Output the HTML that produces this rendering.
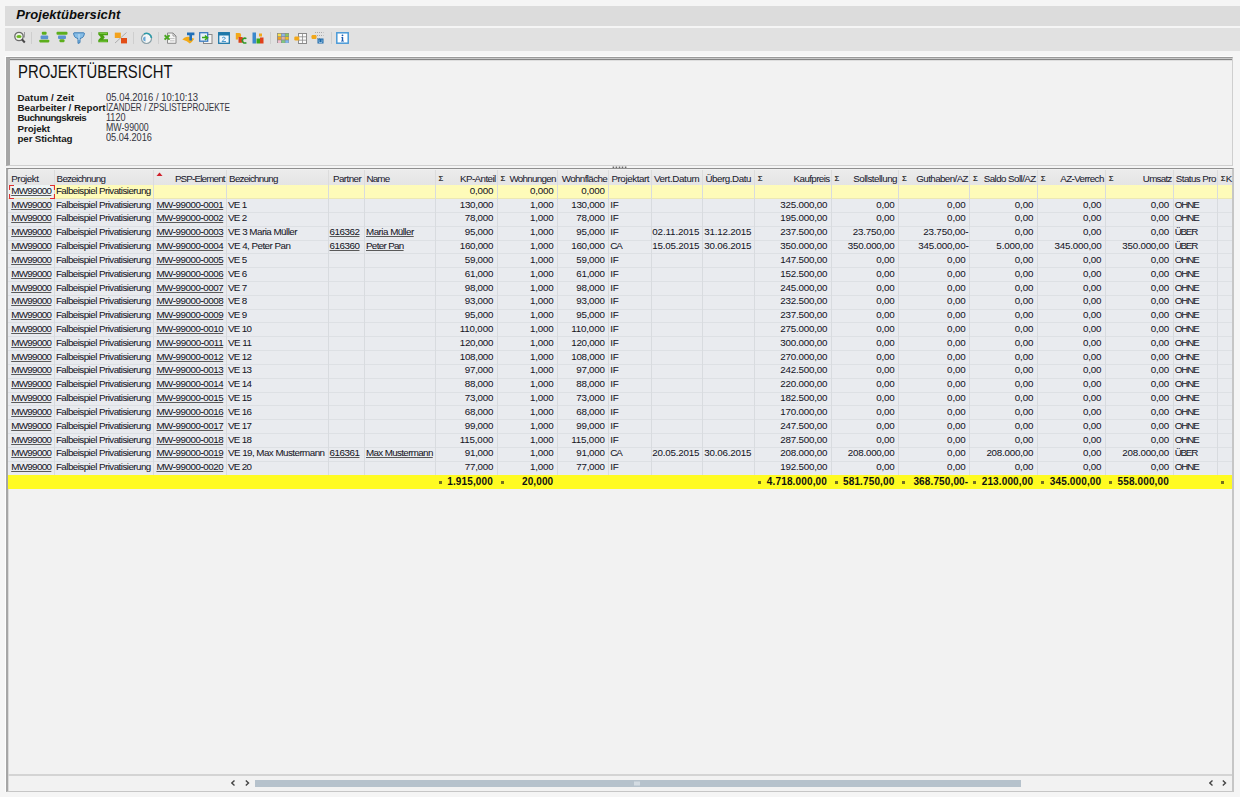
<!DOCTYPE html>
<html><head><meta charset="utf-8"><title>Projektübersicht</title>
<style>
*{box-sizing:border-box;margin:0;padding:0}
html,body{width:1240px;height:797px;overflow:hidden}
body{position:relative;background:#f5f5f5;font-family:"Liberation Sans",sans-serif;color:#1e1e28}
.abs{position:absolute}
.t{position:absolute;white-space:nowrap}
#title{left:5px;top:5.5px;width:1235px;height:20px;background:#dcdcdc}
.ttl{font-size:13px;font-weight:bold;font-style:italic;color:#0c0c0c}
#tb{left:5px;top:27.5px;width:1235px;height:23px;background:#e1e1e1}
#hp{left:6px;top:57px;width:1227px;height:109px;background:#f2f2f2;border-top:1px solid #9a9a9a;border-left:4px solid #a6a6a6;border-right:1px solid #cfcfcf;border-bottom:1.5px solid #d0d0d0;box-shadow:inset 0 1px #c8c8c8,inset 0 2px #858585,inset 0 3px #dedede,-1px -1px 0 #fdfdfd}
.big{font-size:17.6px;color:#111;transform:scaleX(0.845);transform-origin:0 0}
.lb{font-size:9.8px;font-weight:bold;color:#1a1a1a}
.vl{font-size:10px;color:#33333d}
#grid{left:6px;top:167.8px;width:1228px;height:624.5px;background:#f2f2f2;border-top:1.7px solid #8f8f8f;border-left:2px solid #a6a6a6;border-right:2px solid #c6c6c6;border-bottom:1.5px solid #c6c6c6;box-shadow:inset 1px 0 #dadada,-1px 0 0 #fdfdfd}
.c{font-size:9.8px;line-height:13px;color:#15151f;-webkit-text-stroke:0.04px #15151f}
.h{font-size:9.8px;line-height:13px;color:#20202e;-webkit-text-stroke:0.04px #20202e}
.s{font-size:10px;line-height:13px;font-weight:bold;color:#111}
.u span{text-decoration:underline;text-decoration-color:#5a5a5a;text-underline-offset:1px}
.vl2{position:absolute;width:1px;background:#d8dbdf}
.sig{font-size:8px;font-weight:bold;line-height:13px;color:#333}
</style></head><body>

<div id="title" class="abs"></div>
<div class="t ttl" style="left:16.30px;top:6.50px;letter-spacing:0.094px;"><span>Projektübersicht</span></div>
<div id="tb" class="abs"></div>
<div class="abs" style="left:31.0px;top:31.5px;width:1px;height:12px;background:#cecece"></div>
<div class="abs" style="left:91.0px;top:31.5px;width:1px;height:12px;background:#cecece"></div>
<div class="abs" style="left:133.0px;top:31.5px;width:1px;height:12px;background:#cecece"></div>
<div class="abs" style="left:157.7px;top:31.5px;width:1px;height:12px;background:#cecece"></div>
<div class="abs" style="left:270.4px;top:31.5px;width:1px;height:12px;background:#cecece"></div>
<div class="abs" style="left:330.6px;top:31.5px;width:1px;height:12px;background:#cecece"></div>
<svg class="abs" style="left:13.0px;top:31.0px" width="13" height="13" viewBox="0 0 13 13"><circle cx="6" cy="5.5" r="4.2" fill="#eef3e8" stroke="#6a6a6a" stroke-width="1.3"/><ellipse cx="6" cy="5.5" rx="2.6" ry="1.6" fill="#6cb820"/><path d="M8.8 8.3 L11.8 11.5" stroke="#4a4a4a" stroke-width="2"/><path d="M11.5 1 V6.5" stroke="#9a9a9a" stroke-width="1"/></svg>
<svg class="abs" style="left:38.5px;top:31.0px" width="11" height="12" viewBox="0 0 11 12"><rect x="2.8" y="0.8" width="4.8" height="3" rx="1" fill="#5cae1c"/><rect x="1.6" y="4.6" width="7.6" height="3.6" rx="1" fill="#5b93cf"/><rect x="0.3" y="8.8" width="10" height="2.6" rx="0.8" fill="#5cae1c"/></svg>
<svg class="abs" style="left:55.5px;top:31.0px" width="12" height="12" viewBox="0 0 12 12"><rect x="0.5" y="0.8" width="11" height="3" rx="1" fill="#5cae1c"/><rect x="2" y="4.4" width="8" height="3.6" rx="1" fill="#5b93cf"/><rect x="3.5" y="8.2" width="5" height="3" rx="1" fill="#5cae1c"/></svg>
<svg class="abs" style="left:73.0px;top:31.5px" width="12" height="12" viewBox="0 0 12 12"><path d="M1 0.8 H10.8 Q11.6 0.8 11.3 2.2 L10.6 4.2 Q10 5.6 8.4 6 L7 6.6 V10.6 L5 11.4 V6.6 L3.6 6 Q2 5.6 1.4 4.2 L0.7 2.2 Q0.4 0.8 1 0.8 Z" fill="#86bde6" stroke="#3c7cb4" stroke-width="1"/><path d="M6 2 V8" stroke="#d4e9f8" stroke-width="0.8"/></svg>
<svg class="abs" style="left:98.0px;top:32.0px" width="11" height="11" viewBox="0 0 11 11"><path d="M0.3 0.3 H10 V3.3 H5.2 L6.8 5.2 L5.2 7.2 H10 V10.3 H0.3 V8 L2.8 5.2 L0.3 2.5 Z" fill="#4aa012"/><path d="M1.5 1.5 H9 M1.5 9.2 H9" stroke="#86d84a" stroke-width="0.7"/></svg>
<svg class="abs" style="left:114.0px;top:32.0px" width="14" height="12" viewBox="0 0 14 12"><path d="M1 11 L12.5 0.5" stroke="#a0a0a0" stroke-width="0.8"/><rect x="0.8" y="0.6" width="6" height="5.4" fill="#f3a21c"/><rect x="7" y="6" width="6" height="5.4" fill="#e24d16"/></svg>
<svg class="abs" style="left:139.5px;top:31.5px" width="13" height="13" viewBox="0 0 13 13"><circle cx="6.5" cy="6.5" r="5" fill="#f4f6f6" stroke="#8aa0a8" stroke-width="1.2"/><path d="M4 2 A5 5 0 0 1 11.5 6" stroke="#2a9aa8" stroke-width="1.6" fill="none"/><path d="M5.5 4.5 A2.5 2.5 0 0 0 5.5 9.5 Z" fill="#6aa8d8"/></svg>
<svg class="abs" style="left:164.0px;top:32.0px" width="13" height="12" viewBox="0 0 13 12"><path d="M3.5 1 H9 L12 4 V11.3 H3.5 Z" fill="#f4f4f4" stroke="#8a8a8a" stroke-width="1"/><path d="M9 1 V4 H12" fill="none" stroke="#8a8a8a" stroke-width="0.8"/><path d="M0.6 3.3 L5.6 7.6 M5.6 3.3 L0.6 7.6" stroke="#4aa820" stroke-width="1.9"/><path d="M6 6.5 H10.5 M6 8.8 H10.5" stroke="#b0b0b0" stroke-width="0.7"/></svg>
<svg class="abs" style="left:182.0px;top:32.0px" width="13" height="12" viewBox="0 0 13 12"><path d="M0.3 7.5 Q3 4.2 6.5 4.8 L12.3 6.8 Q10 10.5 7.8 11.5 Q5.5 9 0.3 7.5 Z" fill="#f4aa16"/><path d="M5 0.6 H12.4 V3.2 H10 V8.6 H7.4 V3.2 H5 Z" fill="#1f6fb8"/></svg>
<svg class="abs" style="left:199.0px;top:32.0px" width="14" height="12" viewBox="0 0 14 12"><rect x="4.5" y="2.5" width="8.5" height="9" fill="#f4f4f4" stroke="#8a8a8a" stroke-width="1"/><rect x="0.7" y="0.7" width="8" height="8.5" fill="#e8f0f8" stroke="#3a7ac0" stroke-width="1.3"/><path d="M3 5.5 H7.5 M6 3.5 L8.5 5.8 L6 8" stroke="#3aa818" stroke-width="1.6" fill="none"/></svg>
<svg class="abs" style="left:217.5px;top:32.0px" width="12" height="12" viewBox="0 0 12 12"><rect x="0.7" y="0.7" width="10.6" height="10.6" fill="#eef5fa" stroke="#1e78a8" stroke-width="1.3"/><rect x="0.7" y="0.7" width="10.6" height="2.8" fill="#1e78a8"/><path d="M4 6 Q6 4 7.5 6 L4 9.5 H8" stroke="#3a90c8" stroke-width="0.9" fill="none"/></svg>
<svg class="abs" style="left:234.5px;top:32.0px" width="12" height="12" viewBox="0 0 12 12"><path d="M0.8 1 H4.2 Q6.2 1 6.2 3.2 Q6.2 5.4 4.2 5.4 H3 V7.6 H0.8 Z" fill="#f2a81a"/><path d="M3.5 5 H6.6 Q8.4 5 8.4 6.6 Q8.4 7.6 7.4 7.8 Q8.6 8.2 8.4 9.4 Q8.2 10.8 6.4 10.8 H3.5 Z" fill="#d8401a"/><path d="M11.4 6.6 A2.6 2.4 0 1 0 11.4 10.6" stroke="#2f9a28" stroke-width="1.5" fill="none"/></svg>
<svg class="abs" style="left:252.0px;top:32.0px" width="12" height="12" viewBox="0 0 12 12"><rect x="0.5" y="0.5" width="3.5" height="11" fill="#3a88cc"/><rect x="4.5" y="6.5" width="3.5" height="5" fill="#3aa818"/><rect x="8" y="5.5" width="3.5" height="6" fill="#e0401a"/><rect x="7" y="1.5" width="3" height="3" fill="#f2a81a"/></svg>
<svg class="abs" style="left:276.5px;top:32.5px" width="12" height="10" viewBox="0 0 12 10"><rect x="0" y="0" width="12.5" height="10.5" fill="#8a8a8a"/><rect x="0.8" y="0.7" width="3.2" height="2.6" fill="#f8e04a"/><rect x="4.6" y="0.7" width="3.2" height="2.6" fill="#8ab4e8"/><rect x="8.4" y="0.7" width="3.2" height="2.6" fill="#8ac860"/><rect x="0.8" y="4.0" width="3.2" height="2.6" fill="#f0a020"/><rect x="4.6" y="4.0" width="3.2" height="2.6" fill="#e0b0a0"/><rect x="8.4" y="4.0" width="3.2" height="2.6" fill="#f0c020"/><rect x="0.8" y="7.3" width="3.2" height="2.6" fill="#f4c0d0"/><rect x="4.6" y="7.3" width="3.2" height="2.6" fill="#80c880"/><rect x="8.4" y="7.3" width="3.2" height="2.6" fill="#80b8f0"/></svg>
<svg class="abs" style="left:293.5px;top:32.5px" width="13" height="11" viewBox="0 0 13 11"><rect x="4.5" y="0.5" width="8" height="10" fill="#fafafa" stroke="#8a8a8a" stroke-width="1"/><path d="M8.5 0.5 V10.5 M4.5 3.8 H12.5 M4.5 7.2 H12.5" stroke="#8a8a8a" stroke-width="0.8"/><rect x="0.3" y="3.5" width="5" height="4" rx="1.2" fill="#f2a81a"/></svg>
<svg class="abs" style="left:311.0px;top:32.0px" width="13" height="12" viewBox="0 0 13 12"><path d="M4 0.5 H12.5 M4 3.5 H12.5 M4 6.5 H9" stroke="#9a9a9a" stroke-width="0.8" stroke-dasharray="1 1"/><rect x="0.5" y="3" width="5" height="4" rx="1.2" fill="#f2a81a"/><rect x="6.5" y="6.5" width="6" height="5" fill="#1e6aaa"/><path d="M8 7.5 V10.5 H11 V7.5" stroke="#b8d8f0" stroke-width="0.7" fill="none"/></svg>
<svg class="abs" style="left:335.5px;top:31.5px" width="13" height="12" viewBox="0 0 13 12"><rect x="0.8" y="0.8" width="11.4" height="10.4" fill="#fff" stroke="#4a9ad8" stroke-width="1.5"/><circle cx="6.5" cy="3.3" r="0.9" fill="#1a5ab0"/><path d="M5.3 5 H7.2 V8.8 H8 V9.6 H5 V8.8 H5.8 V5.8 H5.3 Z" fill="#1a5ab0"/></svg>
<div id="hp" class="abs"></div>
<div class="t big" style="left:18.00px;top:62.00px;"><span>PROJEKTÜBERSICHT</span></div>
<div class="t lb" style="left:17.50px;top:92.20px;letter-spacing:0.035px;"><span>Datum / Zeit</span></div>
<div class="t vl" style="left:105.50px;top:91.80px;transform:scaleX(0.9454);transform-origin:0 0;"><span>05.04.2016 / 10:10:13</span></div>
<div class="t lb" style="left:17.50px;top:102.33px;letter-spacing:-0.011px;"><span>Bearbeiter / Report</span></div>
<div class="t vl" style="left:105.50px;top:101.93px;transform:scaleX(0.8144);transform-origin:0 0;"><span>IZANDER / ZPSLISTEPROJEKTE</span></div>
<div class="t lb" style="left:17.50px;top:112.46px;letter-spacing:-0.583px;"><span>Buchnungskreis</span></div>
<div class="t vl" style="left:105.50px;top:112.06px;transform:scaleX(0.9063);transform-origin:0 0;"><span>1120</span></div>
<div class="t lb" style="left:17.50px;top:122.59px;letter-spacing:-0.103px;"><span>Projekt</span></div>
<div class="t vl" style="left:105.50px;top:122.19px;transform:scaleX(0.8762);transform-origin:0 0;"><span>MW-99000</span></div>
<div class="t lb" style="left:17.50px;top:132.72px;letter-spacing:-0.152px;"><span>per Stichtag</span></div>
<div class="t vl" style="left:105.50px;top:132.32px;transform:scaleX(0.9169);transform-origin:0 0;"><span>05.04.2016</span></div>
<svg class="abs" style="left:612px;top:165.5px" width="16" height="3"><rect x="0.6" y="0.5" width="1.6" height="1.6" fill="#6a6a6a"/><rect x="3.6" y="0.5" width="1.6" height="1.6" fill="#6a6a6a"/><rect x="6.7" y="0.5" width="1.6" height="1.6" fill="#6a6a6a"/><rect x="9.7" y="0.5" width="1.6" height="1.6" fill="#6a6a6a"/><rect x="12.8" y="0.5" width="1.6" height="1.6" fill="#6a6a6a"/></svg>
<div id="grid" class="abs"></div>
<div class="abs" style="left:8px;top:169.50px;width:1224px;height:15.10px;background:linear-gradient(#ececec,#e4e4e4)"></div>
<div class="abs" style="left:8px;top:184.60px;width:1224px;height:290.40px;background:#e9ebef"></div>
<div class="abs" style="left:8px;top:184.60px;width:1224px;height:13.50px;background:#fefbb9"></div>
<div class="abs" style="left:8px;top:198.10px;width:1224px;height:1px;background:#ece8b4"></div>
<div class="abs" style="left:8px;top:211.92px;width:1224px;height:1px;background:#dde0e4"></div>
<div class="abs" style="left:8px;top:225.74px;width:1224px;height:1px;background:#dde0e4"></div>
<div class="abs" style="left:8px;top:239.56px;width:1224px;height:1px;background:#dde0e4"></div>
<div class="abs" style="left:8px;top:253.38px;width:1224px;height:1px;background:#dde0e4"></div>
<div class="abs" style="left:8px;top:267.20px;width:1224px;height:1px;background:#dde0e4"></div>
<div class="abs" style="left:8px;top:281.02px;width:1224px;height:1px;background:#dde0e4"></div>
<div class="abs" style="left:8px;top:294.84px;width:1224px;height:1px;background:#dde0e4"></div>
<div class="abs" style="left:8px;top:308.66px;width:1224px;height:1px;background:#dde0e4"></div>
<div class="abs" style="left:8px;top:322.48px;width:1224px;height:1px;background:#dde0e4"></div>
<div class="abs" style="left:8px;top:336.30px;width:1224px;height:1px;background:#dde0e4"></div>
<div class="abs" style="left:8px;top:350.12px;width:1224px;height:1px;background:#dde0e4"></div>
<div class="abs" style="left:8px;top:363.94px;width:1224px;height:1px;background:#dde0e4"></div>
<div class="abs" style="left:8px;top:377.76px;width:1224px;height:1px;background:#dde0e4"></div>
<div class="abs" style="left:8px;top:391.58px;width:1224px;height:1px;background:#dde0e4"></div>
<div class="abs" style="left:8px;top:405.40px;width:1224px;height:1px;background:#dde0e4"></div>
<div class="abs" style="left:8px;top:419.22px;width:1224px;height:1px;background:#dde0e4"></div>
<div class="abs" style="left:8px;top:433.04px;width:1224px;height:1px;background:#dde0e4"></div>
<div class="abs" style="left:8px;top:446.86px;width:1224px;height:1px;background:#dde0e4"></div>
<div class="abs" style="left:8px;top:460.68px;width:1224px;height:1px;background:#dde0e4"></div>
<div class="abs" style="left:8px;top:474.50px;width:1224px;height:1px;background:#dde0e4"></div>
<div class="abs" style="left:8px;top:184.60px;width:46px;height:13.32px;background:#eef4f4"></div>
<div class="abs" style="left:8px;top:475.00px;width:1224px;height:14.00px;background:#fffb22"></div>
<div class="vl2" style="left:53.5px;top:169.50px;height:15.10px;background:#dcdcdc"></div>
<div class="vl2" style="left:53.5px;top:184.60px;height:290.40px"></div>
<div class="vl2" style="left:153.0px;top:169.50px;height:15.10px;background:#dcdcdc"></div>
<div class="vl2" style="left:153.0px;top:184.60px;height:290.40px"></div>
<div class="vl2" style="left:226.0px;top:169.50px;height:15.10px;background:#dcdcdc"></div>
<div class="vl2" style="left:226.0px;top:184.60px;height:290.40px"></div>
<div class="vl2" style="left:328.0px;top:169.50px;height:15.10px;background:#dcdcdc"></div>
<div class="vl2" style="left:328.0px;top:184.60px;height:290.40px"></div>
<div class="vl2" style="left:363.5px;top:169.50px;height:15.10px;background:#dcdcdc"></div>
<div class="vl2" style="left:363.5px;top:184.60px;height:290.40px"></div>
<div class="vl2" style="left:434.8px;top:169.50px;height:15.10px;background:#dcdcdc"></div>
<div class="vl2" style="left:434.8px;top:184.60px;height:290.40px"></div>
<div class="vl2" style="left:496.8px;top:169.50px;height:15.10px;background:#dcdcdc"></div>
<div class="vl2" style="left:496.8px;top:184.60px;height:290.40px"></div>
<div class="vl2" style="left:557.1px;top:169.50px;height:15.10px;background:#dcdcdc"></div>
<div class="vl2" style="left:557.1px;top:184.60px;height:290.40px"></div>
<div class="vl2" style="left:608.3px;top:169.50px;height:15.10px;background:#dcdcdc"></div>
<div class="vl2" style="left:608.3px;top:184.60px;height:290.40px"></div>
<div class="vl2" style="left:650.8px;top:169.50px;height:15.10px;background:#dcdcdc"></div>
<div class="vl2" style="left:650.8px;top:184.60px;height:290.40px"></div>
<div class="vl2" style="left:702.3px;top:169.50px;height:15.10px;background:#dcdcdc"></div>
<div class="vl2" style="left:702.3px;top:184.60px;height:290.40px"></div>
<div class="vl2" style="left:754.0px;top:169.50px;height:15.10px;background:#dcdcdc"></div>
<div class="vl2" style="left:754.0px;top:184.60px;height:290.40px"></div>
<div class="vl2" style="left:830.8px;top:169.50px;height:15.10px;background:#dcdcdc"></div>
<div class="vl2" style="left:830.8px;top:184.60px;height:290.40px"></div>
<div class="vl2" style="left:898.2px;top:169.50px;height:15.10px;background:#dcdcdc"></div>
<div class="vl2" style="left:898.2px;top:184.60px;height:290.40px"></div>
<div class="vl2" style="left:969.2px;top:169.50px;height:15.10px;background:#dcdcdc"></div>
<div class="vl2" style="left:969.2px;top:184.60px;height:290.40px"></div>
<div class="vl2" style="left:1036.9px;top:169.50px;height:15.10px;background:#dcdcdc"></div>
<div class="vl2" style="left:1036.9px;top:184.60px;height:290.40px"></div>
<div class="vl2" style="left:1105.0px;top:169.50px;height:15.10px;background:#dcdcdc"></div>
<div class="vl2" style="left:1105.0px;top:184.60px;height:290.40px"></div>
<div class="vl2" style="left:1172.7px;top:169.50px;height:15.10px;background:#dcdcdc"></div>
<div class="vl2" style="left:1172.7px;top:184.60px;height:290.40px"></div>
<div class="vl2" style="left:1216.9px;top:169.50px;height:15.10px;background:#dcdcdc"></div>
<div class="vl2" style="left:1216.9px;top:184.60px;height:290.40px"></div>
<div class="t h" style="left:11.30px;top:171.80px;letter-spacing:-0.475px;"><span>Projekt</span></div>
<div class="t h" style="left:56.60px;top:171.80px;letter-spacing:-0.729px;"><span>Bezeichnung</span></div>
<div class="t h" style="left:153.50px;top:171.80px;width:71.30px;text-align:right;letter-spacing:-0.810px;"><span>PSP-Element</span></div>
<div class="t h" style="left:229.10px;top:171.80px;letter-spacing:-0.729px;"><span>Bezeichnung</span></div>
<div class="t h" style="left:333.00px;top:171.80px;letter-spacing:-0.560px;"><span>Partner</span></div>
<div class="t h" style="left:366.60px;top:171.80px;letter-spacing:-0.883px;"><span>Name</span></div>
<div class="t sig" style="left:438.6px;top:172.40px">Σ</div>
<div class="t h" style="left:435.30px;top:171.80px;width:60.30px;text-align:right;letter-spacing:-0.585px;"><span>KP-Anteil</span></div>
<div class="t sig" style="left:500.6px;top:172.40px">Σ</div>
<div class="t h" style="left:497.30px;top:171.80px;width:58.60px;text-align:right;letter-spacing:-0.685px;"><span>Wohnungen</span></div>
<div class="t h" style="left:557.60px;top:171.80px;width:49.50px;text-align:right;letter-spacing:-0.624px;"><span>Wohnfläche</span></div>
<div class="t h" style="left:611.40px;top:171.80px;letter-spacing:-0.416px;"><span>Projektart</span></div>
<div class="t h" style="left:653.90px;top:171.80px;letter-spacing:-0.358px;"><span>Vert.Datum</span></div>
<div class="t h" style="left:705.40px;top:171.80px;letter-spacing:-0.454px;"><span>Überg.Datu</span></div>
<div class="t sig" style="left:757.8px;top:172.40px">Σ</div>
<div class="t h" style="left:754.50px;top:171.80px;width:75.10px;text-align:right;letter-spacing:-0.602px;"><span>Kaufpreis</span></div>
<div class="t sig" style="left:834.6px;top:172.40px">Σ</div>
<div class="t h" style="left:831.30px;top:171.80px;width:65.70px;text-align:right;letter-spacing:-0.533px;"><span>Sollstellung</span></div>
<div class="t sig" style="left:902.0px;top:172.40px">Σ</div>
<div class="t h" style="left:898.70px;top:171.80px;width:69.30px;text-align:right;letter-spacing:-0.602px;"><span>Guthaben/AZ</span></div>
<div class="t sig" style="left:973.0px;top:172.40px">Σ</div>
<div class="t h" style="left:969.70px;top:171.80px;width:66.00px;text-align:right;letter-spacing:-0.567px;"><span>Saldo Soll/AZ</span></div>
<div class="t sig" style="left:1040.7px;top:172.40px">Σ</div>
<div class="t h" style="left:1037.40px;top:171.80px;width:66.40px;text-align:right;letter-spacing:-0.599px;"><span>AZ-Verrech</span></div>
<div class="t sig" style="left:1108.8px;top:172.40px">Σ</div>
<div class="t h" style="left:1105.50px;top:171.80px;width:66.00px;text-align:right;letter-spacing:-0.762px;"><span>Umsatz</span></div>
<div class="t h" style="left:1175.80px;top:171.80px;letter-spacing:-0.573px;"><span>Status Pro</span></div>
<div class="t sig" style="left:1220.7px;top:172.40px">Σ</div>
<div class="t h" style="left:1225.80px;top:171.80px;letter-spacing:-1.158px;"><span>K</span></div>
<svg class="abs" style="left:155.5px;top:171.5px" width="7" height="5"><path d="M0.5 4 L3.5 0.5 L6.5 4 Z" fill="#d0202a"/></svg>
<div class="t c u" style="left:11.20px;top:183.80px;letter-spacing:-0.646px;"><span>MW99000</span></div>
<div class="t c" style="left:55.90px;top:183.80px;letter-spacing:-0.539px;"><span>Falbeispiel Privatisierung</span></div>
<div class="t c" style="left:435.30px;top:183.80px;width:57.90px;text-align:right;letter-spacing:-0.214px;"><span>0,000</span></div>
<div class="t c" style="left:497.30px;top:183.80px;width:56.20px;text-align:right;letter-spacing:-0.214px;"><span>0,000</span></div>
<div class="t c" style="left:557.60px;top:183.80px;width:47.10px;text-align:right;letter-spacing:-0.214px;"><span>0,000</span></div>
<div class="t c u" style="left:11.20px;top:197.62px;letter-spacing:-0.646px;"><span>MW99000</span></div>
<div class="t c" style="left:55.90px;top:197.62px;letter-spacing:-0.539px;"><span>Falbeispiel Privatisierung</span></div>
<div class="t c u" style="left:153.50px;top:197.62px;width:69.70px;text-align:right;letter-spacing:-0.464px;"><span>MW-99000-0001</span></div>
<div class="t c" style="left:228.00px;top:197.62px;letter-spacing:-0.715px;"><span>VE 1</span></div>
<div class="t c" style="left:435.30px;top:197.62px;width:57.90px;text-align:right;letter-spacing:-0.281px;"><span>130,000</span></div>
<div class="t c" style="left:497.30px;top:197.62px;width:56.20px;text-align:right;letter-spacing:-0.214px;"><span>1,000</span></div>
<div class="t c" style="left:557.60px;top:197.62px;width:47.10px;text-align:right;letter-spacing:-0.281px;"><span>130,000</span></div>
<div class="t c" style="left:610.30px;top:197.62px;letter-spacing:-0.315px;"><span>IF</span></div>
<div class="t c" style="left:754.50px;top:197.62px;width:72.70px;text-align:right;letter-spacing:-0.213px;"><span>325.000,00</span></div>
<div class="t c" style="left:831.30px;top:197.62px;width:63.30px;text-align:right;letter-spacing:-0.153px;"><span>0,00</span></div>
<div class="t c" style="left:898.70px;top:197.62px;width:66.90px;text-align:right;letter-spacing:-0.153px;"><span>0,00</span></div>
<div class="t c" style="left:969.70px;top:197.62px;width:63.60px;text-align:right;letter-spacing:-0.153px;"><span>0,00</span></div>
<div class="t c" style="left:1037.40px;top:197.62px;width:64.00px;text-align:right;letter-spacing:-0.153px;"><span>0,00</span></div>
<div class="t c" style="left:1105.50px;top:197.62px;width:63.60px;text-align:right;letter-spacing:-0.153px;"><span>0,00</span></div>
<div class="t c" style="left:1174.70px;top:197.62px;letter-spacing:-1.057px;"><span>OHNE</span></div>
<div class="t c u" style="left:11.20px;top:211.44px;letter-spacing:-0.646px;"><span>MW99000</span></div>
<div class="t c" style="left:55.90px;top:211.44px;letter-spacing:-0.539px;"><span>Falbeispiel Privatisierung</span></div>
<div class="t c u" style="left:153.50px;top:211.44px;width:69.70px;text-align:right;letter-spacing:-0.464px;"><span>MW-99000-0002</span></div>
<div class="t c" style="left:228.00px;top:211.44px;letter-spacing:-0.715px;"><span>VE 2</span></div>
<div class="t c" style="left:435.30px;top:211.44px;width:57.90px;text-align:right;letter-spacing:-0.252px;"><span>78,000</span></div>
<div class="t c" style="left:497.30px;top:211.44px;width:56.20px;text-align:right;letter-spacing:-0.214px;"><span>1,000</span></div>
<div class="t c" style="left:557.60px;top:211.44px;width:47.10px;text-align:right;letter-spacing:-0.252px;"><span>78,000</span></div>
<div class="t c" style="left:610.30px;top:211.44px;letter-spacing:-0.315px;"><span>IF</span></div>
<div class="t c" style="left:754.50px;top:211.44px;width:72.70px;text-align:right;letter-spacing:-0.213px;"><span>195.000,00</span></div>
<div class="t c" style="left:831.30px;top:211.44px;width:63.30px;text-align:right;letter-spacing:-0.153px;"><span>0,00</span></div>
<div class="t c" style="left:898.70px;top:211.44px;width:66.90px;text-align:right;letter-spacing:-0.153px;"><span>0,00</span></div>
<div class="t c" style="left:969.70px;top:211.44px;width:63.60px;text-align:right;letter-spacing:-0.153px;"><span>0,00</span></div>
<div class="t c" style="left:1037.40px;top:211.44px;width:64.00px;text-align:right;letter-spacing:-0.153px;"><span>0,00</span></div>
<div class="t c" style="left:1105.50px;top:211.44px;width:63.60px;text-align:right;letter-spacing:-0.153px;"><span>0,00</span></div>
<div class="t c" style="left:1174.70px;top:211.44px;letter-spacing:-1.057px;"><span>OHNE</span></div>
<div class="t c u" style="left:11.20px;top:225.26px;letter-spacing:-0.646px;"><span>MW99000</span></div>
<div class="t c" style="left:55.90px;top:225.26px;letter-spacing:-0.539px;"><span>Falbeispiel Privatisierung</span></div>
<div class="t c u" style="left:153.50px;top:225.26px;width:69.70px;text-align:right;letter-spacing:-0.464px;"><span>MW-99000-0003</span></div>
<div class="t c" style="left:228.00px;top:225.26px;letter-spacing:-0.522px;"><span>VE 3 Maria Müller</span></div>
<div class="t c u" style="left:329.50px;top:225.26px;letter-spacing:-0.455px;"><span>616362</span></div>
<div class="t c u" style="left:366.00px;top:225.26px;letter-spacing:-0.515px;"><span>Maria Müller</span></div>
<div class="t c" style="left:435.30px;top:225.26px;width:57.90px;text-align:right;letter-spacing:-0.252px;"><span>95,000</span></div>
<div class="t c" style="left:497.30px;top:225.26px;width:56.20px;text-align:right;letter-spacing:-0.214px;"><span>1,000</span></div>
<div class="t c" style="left:557.60px;top:225.26px;width:47.10px;text-align:right;letter-spacing:-0.252px;"><span>95,000</span></div>
<div class="t c" style="left:610.30px;top:225.26px;letter-spacing:-0.315px;"><span>IF</span></div>
<div class="t c" style="left:652.30px;top:225.26px;letter-spacing:-0.139px;"><span>02.11.2015</span></div>
<div class="t c" style="left:704.30px;top:225.26px;letter-spacing:-0.213px;"><span>31.12.2015</span></div>
<div class="t c" style="left:754.50px;top:225.26px;width:72.70px;text-align:right;letter-spacing:-0.213px;"><span>237.500,00</span></div>
<div class="t c" style="left:831.30px;top:225.26px;width:63.30px;text-align:right;letter-spacing:-0.185px;"><span>23.750,00</span></div>
<div class="t c" style="left:898.70px;top:225.26px;width:69.80px;text-align:right;letter-spacing:-0.161px;"><span>23.750,00-</span></div>
<div class="t c" style="left:969.70px;top:225.26px;width:63.60px;text-align:right;letter-spacing:-0.153px;"><span>0,00</span></div>
<div class="t c" style="left:1037.40px;top:225.26px;width:64.00px;text-align:right;letter-spacing:-0.153px;"><span>0,00</span></div>
<div class="t c" style="left:1105.50px;top:225.26px;width:63.60px;text-align:right;letter-spacing:-0.153px;"><span>0,00</span></div>
<div class="t c" style="left:1174.70px;top:225.26px;letter-spacing:-1.211px;"><span>ÜBER</span></div>
<div class="t c u" style="left:11.20px;top:239.08px;letter-spacing:-0.646px;"><span>MW99000</span></div>
<div class="t c" style="left:55.90px;top:239.08px;letter-spacing:-0.539px;"><span>Falbeispiel Privatisierung</span></div>
<div class="t c u" style="left:153.50px;top:239.08px;width:69.70px;text-align:right;letter-spacing:-0.464px;"><span>MW-99000-0004</span></div>
<div class="t c" style="left:228.00px;top:239.08px;letter-spacing:-0.530px;"><span>VE 4, Peter Pan</span></div>
<div class="t c u" style="left:329.50px;top:239.08px;letter-spacing:-0.455px;"><span>616360</span></div>
<div class="t c u" style="left:366.00px;top:239.08px;letter-spacing:-0.667px;"><span>Peter Pan</span></div>
<div class="t c" style="left:435.30px;top:239.08px;width:57.90px;text-align:right;letter-spacing:-0.281px;"><span>160,000</span></div>
<div class="t c" style="left:497.30px;top:239.08px;width:56.20px;text-align:right;letter-spacing:-0.214px;"><span>1,000</span></div>
<div class="t c" style="left:557.60px;top:239.08px;width:47.10px;text-align:right;letter-spacing:-0.281px;"><span>160,000</span></div>
<div class="t c" style="left:610.30px;top:239.08px;letter-spacing:-1.190px;"><span>CA</span></div>
<div class="t c" style="left:652.30px;top:239.08px;letter-spacing:-0.213px;"><span>15.05.2015</span></div>
<div class="t c" style="left:704.30px;top:239.08px;letter-spacing:-0.213px;"><span>30.06.2015</span></div>
<div class="t c" style="left:754.50px;top:239.08px;width:72.70px;text-align:right;letter-spacing:-0.213px;"><span>350.000,00</span></div>
<div class="t c" style="left:831.30px;top:239.08px;width:63.30px;text-align:right;letter-spacing:-0.213px;"><span>350.000,00</span></div>
<div class="t c" style="left:898.70px;top:239.08px;width:69.80px;text-align:right;letter-spacing:-0.187px;"><span>345.000,00-</span></div>
<div class="t c" style="left:969.70px;top:239.08px;width:63.60px;text-align:right;letter-spacing:-0.151px;"><span>5.000,00</span></div>
<div class="t c" style="left:1037.40px;top:239.08px;width:64.00px;text-align:right;letter-spacing:-0.213px;"><span>345.000,00</span></div>
<div class="t c" style="left:1105.50px;top:239.08px;width:63.60px;text-align:right;letter-spacing:-0.213px;"><span>350.000,00</span></div>
<div class="t c" style="left:1174.70px;top:239.08px;letter-spacing:-1.211px;"><span>ÜBER</span></div>
<div class="t c u" style="left:11.20px;top:252.90px;letter-spacing:-0.646px;"><span>MW99000</span></div>
<div class="t c" style="left:55.90px;top:252.90px;letter-spacing:-0.539px;"><span>Falbeispiel Privatisierung</span></div>
<div class="t c u" style="left:153.50px;top:252.90px;width:69.70px;text-align:right;letter-spacing:-0.464px;"><span>MW-99000-0005</span></div>
<div class="t c" style="left:228.00px;top:252.90px;letter-spacing:-0.715px;"><span>VE 5</span></div>
<div class="t c" style="left:435.30px;top:252.90px;width:57.90px;text-align:right;letter-spacing:-0.252px;"><span>59,000</span></div>
<div class="t c" style="left:497.30px;top:252.90px;width:56.20px;text-align:right;letter-spacing:-0.214px;"><span>1,000</span></div>
<div class="t c" style="left:557.60px;top:252.90px;width:47.10px;text-align:right;letter-spacing:-0.252px;"><span>59,000</span></div>
<div class="t c" style="left:610.30px;top:252.90px;letter-spacing:-0.315px;"><span>IF</span></div>
<div class="t c" style="left:754.50px;top:252.90px;width:72.70px;text-align:right;letter-spacing:-0.213px;"><span>147.500,00</span></div>
<div class="t c" style="left:831.30px;top:252.90px;width:63.30px;text-align:right;letter-spacing:-0.153px;"><span>0,00</span></div>
<div class="t c" style="left:898.70px;top:252.90px;width:66.90px;text-align:right;letter-spacing:-0.153px;"><span>0,00</span></div>
<div class="t c" style="left:969.70px;top:252.90px;width:63.60px;text-align:right;letter-spacing:-0.153px;"><span>0,00</span></div>
<div class="t c" style="left:1037.40px;top:252.90px;width:64.00px;text-align:right;letter-spacing:-0.153px;"><span>0,00</span></div>
<div class="t c" style="left:1105.50px;top:252.90px;width:63.60px;text-align:right;letter-spacing:-0.153px;"><span>0,00</span></div>
<div class="t c" style="left:1174.70px;top:252.90px;letter-spacing:-1.057px;"><span>OHNE</span></div>
<div class="t c u" style="left:11.20px;top:266.72px;letter-spacing:-0.646px;"><span>MW99000</span></div>
<div class="t c" style="left:55.90px;top:266.72px;letter-spacing:-0.539px;"><span>Falbeispiel Privatisierung</span></div>
<div class="t c u" style="left:153.50px;top:266.72px;width:69.70px;text-align:right;letter-spacing:-0.464px;"><span>MW-99000-0006</span></div>
<div class="t c" style="left:228.00px;top:266.72px;letter-spacing:-0.715px;"><span>VE 6</span></div>
<div class="t c" style="left:435.30px;top:266.72px;width:57.90px;text-align:right;letter-spacing:-0.252px;"><span>61,000</span></div>
<div class="t c" style="left:497.30px;top:266.72px;width:56.20px;text-align:right;letter-spacing:-0.214px;"><span>1,000</span></div>
<div class="t c" style="left:557.60px;top:266.72px;width:47.10px;text-align:right;letter-spacing:-0.252px;"><span>61,000</span></div>
<div class="t c" style="left:610.30px;top:266.72px;letter-spacing:-0.315px;"><span>IF</span></div>
<div class="t c" style="left:754.50px;top:266.72px;width:72.70px;text-align:right;letter-spacing:-0.213px;"><span>152.500,00</span></div>
<div class="t c" style="left:831.30px;top:266.72px;width:63.30px;text-align:right;letter-spacing:-0.153px;"><span>0,00</span></div>
<div class="t c" style="left:898.70px;top:266.72px;width:66.90px;text-align:right;letter-spacing:-0.153px;"><span>0,00</span></div>
<div class="t c" style="left:969.70px;top:266.72px;width:63.60px;text-align:right;letter-spacing:-0.153px;"><span>0,00</span></div>
<div class="t c" style="left:1037.40px;top:266.72px;width:64.00px;text-align:right;letter-spacing:-0.153px;"><span>0,00</span></div>
<div class="t c" style="left:1105.50px;top:266.72px;width:63.60px;text-align:right;letter-spacing:-0.153px;"><span>0,00</span></div>
<div class="t c" style="left:1174.70px;top:266.72px;letter-spacing:-1.057px;"><span>OHNE</span></div>
<div class="t c u" style="left:11.20px;top:280.54px;letter-spacing:-0.646px;"><span>MW99000</span></div>
<div class="t c" style="left:55.90px;top:280.54px;letter-spacing:-0.539px;"><span>Falbeispiel Privatisierung</span></div>
<div class="t c u" style="left:153.50px;top:280.54px;width:69.70px;text-align:right;letter-spacing:-0.464px;"><span>MW-99000-0007</span></div>
<div class="t c" style="left:228.00px;top:280.54px;letter-spacing:-0.715px;"><span>VE 7</span></div>
<div class="t c" style="left:435.30px;top:280.54px;width:57.90px;text-align:right;letter-spacing:-0.252px;"><span>98,000</span></div>
<div class="t c" style="left:497.30px;top:280.54px;width:56.20px;text-align:right;letter-spacing:-0.214px;"><span>1,000</span></div>
<div class="t c" style="left:557.60px;top:280.54px;width:47.10px;text-align:right;letter-spacing:-0.252px;"><span>98,000</span></div>
<div class="t c" style="left:610.30px;top:280.54px;letter-spacing:-0.315px;"><span>IF</span></div>
<div class="t c" style="left:754.50px;top:280.54px;width:72.70px;text-align:right;letter-spacing:-0.213px;"><span>245.000,00</span></div>
<div class="t c" style="left:831.30px;top:280.54px;width:63.30px;text-align:right;letter-spacing:-0.153px;"><span>0,00</span></div>
<div class="t c" style="left:898.70px;top:280.54px;width:66.90px;text-align:right;letter-spacing:-0.153px;"><span>0,00</span></div>
<div class="t c" style="left:969.70px;top:280.54px;width:63.60px;text-align:right;letter-spacing:-0.153px;"><span>0,00</span></div>
<div class="t c" style="left:1037.40px;top:280.54px;width:64.00px;text-align:right;letter-spacing:-0.153px;"><span>0,00</span></div>
<div class="t c" style="left:1105.50px;top:280.54px;width:63.60px;text-align:right;letter-spacing:-0.153px;"><span>0,00</span></div>
<div class="t c" style="left:1174.70px;top:280.54px;letter-spacing:-1.057px;"><span>OHNE</span></div>
<div class="t c u" style="left:11.20px;top:294.36px;letter-spacing:-0.646px;"><span>MW99000</span></div>
<div class="t c" style="left:55.90px;top:294.36px;letter-spacing:-0.539px;"><span>Falbeispiel Privatisierung</span></div>
<div class="t c u" style="left:153.50px;top:294.36px;width:69.70px;text-align:right;letter-spacing:-0.464px;"><span>MW-99000-0008</span></div>
<div class="t c" style="left:228.00px;top:294.36px;letter-spacing:-0.715px;"><span>VE 8</span></div>
<div class="t c" style="left:435.30px;top:294.36px;width:57.90px;text-align:right;letter-spacing:-0.252px;"><span>93,000</span></div>
<div class="t c" style="left:497.30px;top:294.36px;width:56.20px;text-align:right;letter-spacing:-0.214px;"><span>1,000</span></div>
<div class="t c" style="left:557.60px;top:294.36px;width:47.10px;text-align:right;letter-spacing:-0.252px;"><span>93,000</span></div>
<div class="t c" style="left:610.30px;top:294.36px;letter-spacing:-0.315px;"><span>IF</span></div>
<div class="t c" style="left:754.50px;top:294.36px;width:72.70px;text-align:right;letter-spacing:-0.213px;"><span>232.500,00</span></div>
<div class="t c" style="left:831.30px;top:294.36px;width:63.30px;text-align:right;letter-spacing:-0.153px;"><span>0,00</span></div>
<div class="t c" style="left:898.70px;top:294.36px;width:66.90px;text-align:right;letter-spacing:-0.153px;"><span>0,00</span></div>
<div class="t c" style="left:969.70px;top:294.36px;width:63.60px;text-align:right;letter-spacing:-0.153px;"><span>0,00</span></div>
<div class="t c" style="left:1037.40px;top:294.36px;width:64.00px;text-align:right;letter-spacing:-0.153px;"><span>0,00</span></div>
<div class="t c" style="left:1105.50px;top:294.36px;width:63.60px;text-align:right;letter-spacing:-0.153px;"><span>0,00</span></div>
<div class="t c" style="left:1174.70px;top:294.36px;letter-spacing:-1.057px;"><span>OHNE</span></div>
<div class="t c u" style="left:11.20px;top:308.18px;letter-spacing:-0.646px;"><span>MW99000</span></div>
<div class="t c" style="left:55.90px;top:308.18px;letter-spacing:-0.539px;"><span>Falbeispiel Privatisierung</span></div>
<div class="t c u" style="left:153.50px;top:308.18px;width:69.70px;text-align:right;letter-spacing:-0.464px;"><span>MW-99000-0009</span></div>
<div class="t c" style="left:228.00px;top:308.18px;letter-spacing:-0.715px;"><span>VE 9</span></div>
<div class="t c" style="left:435.30px;top:308.18px;width:57.90px;text-align:right;letter-spacing:-0.252px;"><span>95,000</span></div>
<div class="t c" style="left:497.30px;top:308.18px;width:56.20px;text-align:right;letter-spacing:-0.214px;"><span>1,000</span></div>
<div class="t c" style="left:557.60px;top:308.18px;width:47.10px;text-align:right;letter-spacing:-0.252px;"><span>95,000</span></div>
<div class="t c" style="left:610.30px;top:308.18px;letter-spacing:-0.315px;"><span>IF</span></div>
<div class="t c" style="left:754.50px;top:308.18px;width:72.70px;text-align:right;letter-spacing:-0.213px;"><span>237.500,00</span></div>
<div class="t c" style="left:831.30px;top:308.18px;width:63.30px;text-align:right;letter-spacing:-0.153px;"><span>0,00</span></div>
<div class="t c" style="left:898.70px;top:308.18px;width:66.90px;text-align:right;letter-spacing:-0.153px;"><span>0,00</span></div>
<div class="t c" style="left:969.70px;top:308.18px;width:63.60px;text-align:right;letter-spacing:-0.153px;"><span>0,00</span></div>
<div class="t c" style="left:1037.40px;top:308.18px;width:64.00px;text-align:right;letter-spacing:-0.153px;"><span>0,00</span></div>
<div class="t c" style="left:1105.50px;top:308.18px;width:63.60px;text-align:right;letter-spacing:-0.153px;"><span>0,00</span></div>
<div class="t c" style="left:1174.70px;top:308.18px;letter-spacing:-1.057px;"><span>OHNE</span></div>
<div class="t c u" style="left:11.20px;top:322.00px;letter-spacing:-0.646px;"><span>MW99000</span></div>
<div class="t c" style="left:55.90px;top:322.00px;letter-spacing:-0.539px;"><span>Falbeispiel Privatisierung</span></div>
<div class="t c u" style="left:153.50px;top:322.00px;width:69.70px;text-align:right;letter-spacing:-0.464px;"><span>MW-99000-0010</span></div>
<div class="t c" style="left:228.00px;top:322.00px;letter-spacing:-0.663px;"><span>VE 10</span></div>
<div class="t c" style="left:435.30px;top:322.00px;width:57.90px;text-align:right;letter-spacing:-0.176px;"><span>110,000</span></div>
<div class="t c" style="left:497.30px;top:322.00px;width:56.20px;text-align:right;letter-spacing:-0.214px;"><span>1,000</span></div>
<div class="t c" style="left:557.60px;top:322.00px;width:47.10px;text-align:right;letter-spacing:-0.176px;"><span>110,000</span></div>
<div class="t c" style="left:610.30px;top:322.00px;letter-spacing:-0.315px;"><span>IF</span></div>
<div class="t c" style="left:754.50px;top:322.00px;width:72.70px;text-align:right;letter-spacing:-0.213px;"><span>275.000,00</span></div>
<div class="t c" style="left:831.30px;top:322.00px;width:63.30px;text-align:right;letter-spacing:-0.153px;"><span>0,00</span></div>
<div class="t c" style="left:898.70px;top:322.00px;width:66.90px;text-align:right;letter-spacing:-0.153px;"><span>0,00</span></div>
<div class="t c" style="left:969.70px;top:322.00px;width:63.60px;text-align:right;letter-spacing:-0.153px;"><span>0,00</span></div>
<div class="t c" style="left:1037.40px;top:322.00px;width:64.00px;text-align:right;letter-spacing:-0.153px;"><span>0,00</span></div>
<div class="t c" style="left:1105.50px;top:322.00px;width:63.60px;text-align:right;letter-spacing:-0.153px;"><span>0,00</span></div>
<div class="t c" style="left:1174.70px;top:322.00px;letter-spacing:-1.057px;"><span>OHNE</span></div>
<div class="t c u" style="left:11.20px;top:335.82px;letter-spacing:-0.646px;"><span>MW99000</span></div>
<div class="t c" style="left:55.90px;top:335.82px;letter-spacing:-0.539px;"><span>Falbeispiel Privatisierung</span></div>
<div class="t c u" style="left:153.50px;top:335.82px;width:69.70px;text-align:right;letter-spacing:-0.409px;"><span>MW-99000-0011</span></div>
<div class="t c" style="left:228.00px;top:335.82px;letter-spacing:-0.516px;"><span>VE 11</span></div>
<div class="t c" style="left:435.30px;top:335.82px;width:57.90px;text-align:right;letter-spacing:-0.281px;"><span>120,000</span></div>
<div class="t c" style="left:497.30px;top:335.82px;width:56.20px;text-align:right;letter-spacing:-0.214px;"><span>1,000</span></div>
<div class="t c" style="left:557.60px;top:335.82px;width:47.10px;text-align:right;letter-spacing:-0.281px;"><span>120,000</span></div>
<div class="t c" style="left:610.30px;top:335.82px;letter-spacing:-0.315px;"><span>IF</span></div>
<div class="t c" style="left:754.50px;top:335.82px;width:72.70px;text-align:right;letter-spacing:-0.213px;"><span>300.000,00</span></div>
<div class="t c" style="left:831.30px;top:335.82px;width:63.30px;text-align:right;letter-spacing:-0.153px;"><span>0,00</span></div>
<div class="t c" style="left:898.70px;top:335.82px;width:66.90px;text-align:right;letter-spacing:-0.153px;"><span>0,00</span></div>
<div class="t c" style="left:969.70px;top:335.82px;width:63.60px;text-align:right;letter-spacing:-0.153px;"><span>0,00</span></div>
<div class="t c" style="left:1037.40px;top:335.82px;width:64.00px;text-align:right;letter-spacing:-0.153px;"><span>0,00</span></div>
<div class="t c" style="left:1105.50px;top:335.82px;width:63.60px;text-align:right;letter-spacing:-0.153px;"><span>0,00</span></div>
<div class="t c" style="left:1174.70px;top:335.82px;letter-spacing:-1.057px;"><span>OHNE</span></div>
<div class="t c u" style="left:11.20px;top:349.64px;letter-spacing:-0.646px;"><span>MW99000</span></div>
<div class="t c" style="left:55.90px;top:349.64px;letter-spacing:-0.539px;"><span>Falbeispiel Privatisierung</span></div>
<div class="t c u" style="left:153.50px;top:349.64px;width:69.70px;text-align:right;letter-spacing:-0.464px;"><span>MW-99000-0012</span></div>
<div class="t c" style="left:228.00px;top:349.64px;letter-spacing:-0.663px;"><span>VE 12</span></div>
<div class="t c" style="left:435.30px;top:349.64px;width:57.90px;text-align:right;letter-spacing:-0.281px;"><span>108,000</span></div>
<div class="t c" style="left:497.30px;top:349.64px;width:56.20px;text-align:right;letter-spacing:-0.214px;"><span>1,000</span></div>
<div class="t c" style="left:557.60px;top:349.64px;width:47.10px;text-align:right;letter-spacing:-0.281px;"><span>108,000</span></div>
<div class="t c" style="left:610.30px;top:349.64px;letter-spacing:-0.315px;"><span>IF</span></div>
<div class="t c" style="left:754.50px;top:349.64px;width:72.70px;text-align:right;letter-spacing:-0.213px;"><span>270.000,00</span></div>
<div class="t c" style="left:831.30px;top:349.64px;width:63.30px;text-align:right;letter-spacing:-0.153px;"><span>0,00</span></div>
<div class="t c" style="left:898.70px;top:349.64px;width:66.90px;text-align:right;letter-spacing:-0.153px;"><span>0,00</span></div>
<div class="t c" style="left:969.70px;top:349.64px;width:63.60px;text-align:right;letter-spacing:-0.153px;"><span>0,00</span></div>
<div class="t c" style="left:1037.40px;top:349.64px;width:64.00px;text-align:right;letter-spacing:-0.153px;"><span>0,00</span></div>
<div class="t c" style="left:1105.50px;top:349.64px;width:63.60px;text-align:right;letter-spacing:-0.153px;"><span>0,00</span></div>
<div class="t c" style="left:1174.70px;top:349.64px;letter-spacing:-1.057px;"><span>OHNE</span></div>
<div class="t c u" style="left:11.20px;top:363.46px;letter-spacing:-0.646px;"><span>MW99000</span></div>
<div class="t c" style="left:55.90px;top:363.46px;letter-spacing:-0.539px;"><span>Falbeispiel Privatisierung</span></div>
<div class="t c u" style="left:153.50px;top:363.46px;width:69.70px;text-align:right;letter-spacing:-0.464px;"><span>MW-99000-0013</span></div>
<div class="t c" style="left:228.00px;top:363.46px;letter-spacing:-0.663px;"><span>VE 13</span></div>
<div class="t c" style="left:435.30px;top:363.46px;width:57.90px;text-align:right;letter-spacing:-0.252px;"><span>97,000</span></div>
<div class="t c" style="left:497.30px;top:363.46px;width:56.20px;text-align:right;letter-spacing:-0.214px;"><span>1,000</span></div>
<div class="t c" style="left:557.60px;top:363.46px;width:47.10px;text-align:right;letter-spacing:-0.252px;"><span>97,000</span></div>
<div class="t c" style="left:610.30px;top:363.46px;letter-spacing:-0.315px;"><span>IF</span></div>
<div class="t c" style="left:754.50px;top:363.46px;width:72.70px;text-align:right;letter-spacing:-0.213px;"><span>242.500,00</span></div>
<div class="t c" style="left:831.30px;top:363.46px;width:63.30px;text-align:right;letter-spacing:-0.153px;"><span>0,00</span></div>
<div class="t c" style="left:898.70px;top:363.46px;width:66.90px;text-align:right;letter-spacing:-0.153px;"><span>0,00</span></div>
<div class="t c" style="left:969.70px;top:363.46px;width:63.60px;text-align:right;letter-spacing:-0.153px;"><span>0,00</span></div>
<div class="t c" style="left:1037.40px;top:363.46px;width:64.00px;text-align:right;letter-spacing:-0.153px;"><span>0,00</span></div>
<div class="t c" style="left:1105.50px;top:363.46px;width:63.60px;text-align:right;letter-spacing:-0.153px;"><span>0,00</span></div>
<div class="t c" style="left:1174.70px;top:363.46px;letter-spacing:-1.057px;"><span>OHNE</span></div>
<div class="t c u" style="left:11.20px;top:377.28px;letter-spacing:-0.646px;"><span>MW99000</span></div>
<div class="t c" style="left:55.90px;top:377.28px;letter-spacing:-0.539px;"><span>Falbeispiel Privatisierung</span></div>
<div class="t c u" style="left:153.50px;top:377.28px;width:69.70px;text-align:right;letter-spacing:-0.464px;"><span>MW-99000-0014</span></div>
<div class="t c" style="left:228.00px;top:377.28px;letter-spacing:-0.663px;"><span>VE 14</span></div>
<div class="t c" style="left:435.30px;top:377.28px;width:57.90px;text-align:right;letter-spacing:-0.252px;"><span>88,000</span></div>
<div class="t c" style="left:497.30px;top:377.28px;width:56.20px;text-align:right;letter-spacing:-0.214px;"><span>1,000</span></div>
<div class="t c" style="left:557.60px;top:377.28px;width:47.10px;text-align:right;letter-spacing:-0.252px;"><span>88,000</span></div>
<div class="t c" style="left:610.30px;top:377.28px;letter-spacing:-0.315px;"><span>IF</span></div>
<div class="t c" style="left:754.50px;top:377.28px;width:72.70px;text-align:right;letter-spacing:-0.213px;"><span>220.000,00</span></div>
<div class="t c" style="left:831.30px;top:377.28px;width:63.30px;text-align:right;letter-spacing:-0.153px;"><span>0,00</span></div>
<div class="t c" style="left:898.70px;top:377.28px;width:66.90px;text-align:right;letter-spacing:-0.153px;"><span>0,00</span></div>
<div class="t c" style="left:969.70px;top:377.28px;width:63.60px;text-align:right;letter-spacing:-0.153px;"><span>0,00</span></div>
<div class="t c" style="left:1037.40px;top:377.28px;width:64.00px;text-align:right;letter-spacing:-0.153px;"><span>0,00</span></div>
<div class="t c" style="left:1105.50px;top:377.28px;width:63.60px;text-align:right;letter-spacing:-0.153px;"><span>0,00</span></div>
<div class="t c" style="left:1174.70px;top:377.28px;letter-spacing:-1.057px;"><span>OHNE</span></div>
<div class="t c u" style="left:11.20px;top:391.10px;letter-spacing:-0.646px;"><span>MW99000</span></div>
<div class="t c" style="left:55.90px;top:391.10px;letter-spacing:-0.539px;"><span>Falbeispiel Privatisierung</span></div>
<div class="t c u" style="left:153.50px;top:391.10px;width:69.70px;text-align:right;letter-spacing:-0.464px;"><span>MW-99000-0015</span></div>
<div class="t c" style="left:228.00px;top:391.10px;letter-spacing:-0.663px;"><span>VE 15</span></div>
<div class="t c" style="left:435.30px;top:391.10px;width:57.90px;text-align:right;letter-spacing:-0.252px;"><span>73,000</span></div>
<div class="t c" style="left:497.30px;top:391.10px;width:56.20px;text-align:right;letter-spacing:-0.214px;"><span>1,000</span></div>
<div class="t c" style="left:557.60px;top:391.10px;width:47.10px;text-align:right;letter-spacing:-0.252px;"><span>73,000</span></div>
<div class="t c" style="left:610.30px;top:391.10px;letter-spacing:-0.315px;"><span>IF</span></div>
<div class="t c" style="left:754.50px;top:391.10px;width:72.70px;text-align:right;letter-spacing:-0.213px;"><span>182.500,00</span></div>
<div class="t c" style="left:831.30px;top:391.10px;width:63.30px;text-align:right;letter-spacing:-0.153px;"><span>0,00</span></div>
<div class="t c" style="left:898.70px;top:391.10px;width:66.90px;text-align:right;letter-spacing:-0.153px;"><span>0,00</span></div>
<div class="t c" style="left:969.70px;top:391.10px;width:63.60px;text-align:right;letter-spacing:-0.153px;"><span>0,00</span></div>
<div class="t c" style="left:1037.40px;top:391.10px;width:64.00px;text-align:right;letter-spacing:-0.153px;"><span>0,00</span></div>
<div class="t c" style="left:1105.50px;top:391.10px;width:63.60px;text-align:right;letter-spacing:-0.153px;"><span>0,00</span></div>
<div class="t c" style="left:1174.70px;top:391.10px;letter-spacing:-1.057px;"><span>OHNE</span></div>
<div class="t c u" style="left:11.20px;top:404.92px;letter-spacing:-0.646px;"><span>MW99000</span></div>
<div class="t c" style="left:55.90px;top:404.92px;letter-spacing:-0.539px;"><span>Falbeispiel Privatisierung</span></div>
<div class="t c u" style="left:153.50px;top:404.92px;width:69.70px;text-align:right;letter-spacing:-0.464px;"><span>MW-99000-0016</span></div>
<div class="t c" style="left:228.00px;top:404.92px;letter-spacing:-0.663px;"><span>VE 16</span></div>
<div class="t c" style="left:435.30px;top:404.92px;width:57.90px;text-align:right;letter-spacing:-0.252px;"><span>68,000</span></div>
<div class="t c" style="left:497.30px;top:404.92px;width:56.20px;text-align:right;letter-spacing:-0.214px;"><span>1,000</span></div>
<div class="t c" style="left:557.60px;top:404.92px;width:47.10px;text-align:right;letter-spacing:-0.252px;"><span>68,000</span></div>
<div class="t c" style="left:610.30px;top:404.92px;letter-spacing:-0.315px;"><span>IF</span></div>
<div class="t c" style="left:754.50px;top:404.92px;width:72.70px;text-align:right;letter-spacing:-0.213px;"><span>170.000,00</span></div>
<div class="t c" style="left:831.30px;top:404.92px;width:63.30px;text-align:right;letter-spacing:-0.153px;"><span>0,00</span></div>
<div class="t c" style="left:898.70px;top:404.92px;width:66.90px;text-align:right;letter-spacing:-0.153px;"><span>0,00</span></div>
<div class="t c" style="left:969.70px;top:404.92px;width:63.60px;text-align:right;letter-spacing:-0.153px;"><span>0,00</span></div>
<div class="t c" style="left:1037.40px;top:404.92px;width:64.00px;text-align:right;letter-spacing:-0.153px;"><span>0,00</span></div>
<div class="t c" style="left:1105.50px;top:404.92px;width:63.60px;text-align:right;letter-spacing:-0.153px;"><span>0,00</span></div>
<div class="t c" style="left:1174.70px;top:404.92px;letter-spacing:-1.057px;"><span>OHNE</span></div>
<div class="t c u" style="left:11.20px;top:418.74px;letter-spacing:-0.646px;"><span>MW99000</span></div>
<div class="t c" style="left:55.90px;top:418.74px;letter-spacing:-0.539px;"><span>Falbeispiel Privatisierung</span></div>
<div class="t c u" style="left:153.50px;top:418.74px;width:69.70px;text-align:right;letter-spacing:-0.464px;"><span>MW-99000-0017</span></div>
<div class="t c" style="left:228.00px;top:418.74px;letter-spacing:-0.663px;"><span>VE 17</span></div>
<div class="t c" style="left:435.30px;top:418.74px;width:57.90px;text-align:right;letter-spacing:-0.252px;"><span>99,000</span></div>
<div class="t c" style="left:497.30px;top:418.74px;width:56.20px;text-align:right;letter-spacing:-0.214px;"><span>1,000</span></div>
<div class="t c" style="left:557.60px;top:418.74px;width:47.10px;text-align:right;letter-spacing:-0.252px;"><span>99,000</span></div>
<div class="t c" style="left:610.30px;top:418.74px;letter-spacing:-0.315px;"><span>IF</span></div>
<div class="t c" style="left:754.50px;top:418.74px;width:72.70px;text-align:right;letter-spacing:-0.213px;"><span>247.500,00</span></div>
<div class="t c" style="left:831.30px;top:418.74px;width:63.30px;text-align:right;letter-spacing:-0.153px;"><span>0,00</span></div>
<div class="t c" style="left:898.70px;top:418.74px;width:66.90px;text-align:right;letter-spacing:-0.153px;"><span>0,00</span></div>
<div class="t c" style="left:969.70px;top:418.74px;width:63.60px;text-align:right;letter-spacing:-0.153px;"><span>0,00</span></div>
<div class="t c" style="left:1037.40px;top:418.74px;width:64.00px;text-align:right;letter-spacing:-0.153px;"><span>0,00</span></div>
<div class="t c" style="left:1105.50px;top:418.74px;width:63.60px;text-align:right;letter-spacing:-0.153px;"><span>0,00</span></div>
<div class="t c" style="left:1174.70px;top:418.74px;letter-spacing:-1.057px;"><span>OHNE</span></div>
<div class="t c u" style="left:11.20px;top:432.56px;letter-spacing:-0.646px;"><span>MW99000</span></div>
<div class="t c" style="left:55.90px;top:432.56px;letter-spacing:-0.539px;"><span>Falbeispiel Privatisierung</span></div>
<div class="t c u" style="left:153.50px;top:432.56px;width:69.70px;text-align:right;letter-spacing:-0.464px;"><span>MW-99000-0018</span></div>
<div class="t c" style="left:228.00px;top:432.56px;letter-spacing:-0.663px;"><span>VE 18</span></div>
<div class="t c" style="left:435.30px;top:432.56px;width:57.90px;text-align:right;letter-spacing:-0.176px;"><span>115,000</span></div>
<div class="t c" style="left:497.30px;top:432.56px;width:56.20px;text-align:right;letter-spacing:-0.214px;"><span>1,000</span></div>
<div class="t c" style="left:557.60px;top:432.56px;width:47.10px;text-align:right;letter-spacing:-0.176px;"><span>115,000</span></div>
<div class="t c" style="left:610.30px;top:432.56px;letter-spacing:-0.315px;"><span>IF</span></div>
<div class="t c" style="left:754.50px;top:432.56px;width:72.70px;text-align:right;letter-spacing:-0.213px;"><span>287.500,00</span></div>
<div class="t c" style="left:831.30px;top:432.56px;width:63.30px;text-align:right;letter-spacing:-0.153px;"><span>0,00</span></div>
<div class="t c" style="left:898.70px;top:432.56px;width:66.90px;text-align:right;letter-spacing:-0.153px;"><span>0,00</span></div>
<div class="t c" style="left:969.70px;top:432.56px;width:63.60px;text-align:right;letter-spacing:-0.153px;"><span>0,00</span></div>
<div class="t c" style="left:1037.40px;top:432.56px;width:64.00px;text-align:right;letter-spacing:-0.153px;"><span>0,00</span></div>
<div class="t c" style="left:1105.50px;top:432.56px;width:63.60px;text-align:right;letter-spacing:-0.153px;"><span>0,00</span></div>
<div class="t c" style="left:1174.70px;top:432.56px;letter-spacing:-1.057px;"><span>OHNE</span></div>
<div class="t c u" style="left:11.20px;top:446.38px;letter-spacing:-0.646px;"><span>MW99000</span></div>
<div class="t c" style="left:55.90px;top:446.38px;letter-spacing:-0.539px;"><span>Falbeispiel Privatisierung</span></div>
<div class="t c u" style="left:153.50px;top:446.38px;width:69.70px;text-align:right;letter-spacing:-0.464px;"><span>MW-99000-0019</span></div>
<div class="t c" style="left:228.00px;top:446.38px;letter-spacing:-0.541px;"><span>VE 19, Max Mustermann</span></div>
<div class="t c u" style="left:329.50px;top:446.38px;letter-spacing:-0.455px;"><span>616361</span></div>
<div class="t c u" style="left:366.00px;top:446.38px;letter-spacing:-0.640px;"><span>Max Mustermann</span></div>
<div class="t c" style="left:435.30px;top:446.38px;width:57.90px;text-align:right;letter-spacing:-0.252px;"><span>91,000</span></div>
<div class="t c" style="left:497.30px;top:446.38px;width:56.20px;text-align:right;letter-spacing:-0.214px;"><span>1,000</span></div>
<div class="t c" style="left:557.60px;top:446.38px;width:47.10px;text-align:right;letter-spacing:-0.252px;"><span>91,000</span></div>
<div class="t c" style="left:610.30px;top:446.38px;letter-spacing:-1.190px;"><span>CA</span></div>
<div class="t c" style="left:652.30px;top:446.38px;letter-spacing:-0.213px;"><span>20.05.2015</span></div>
<div class="t c" style="left:704.30px;top:446.38px;letter-spacing:-0.213px;"><span>30.06.2015</span></div>
<div class="t c" style="left:754.50px;top:446.38px;width:72.70px;text-align:right;letter-spacing:-0.213px;"><span>208.000,00</span></div>
<div class="t c" style="left:831.30px;top:446.38px;width:63.30px;text-align:right;letter-spacing:-0.213px;"><span>208.000,00</span></div>
<div class="t c" style="left:898.70px;top:446.38px;width:66.90px;text-align:right;letter-spacing:-0.153px;"><span>0,00</span></div>
<div class="t c" style="left:969.70px;top:446.38px;width:63.60px;text-align:right;letter-spacing:-0.213px;"><span>208.000,00</span></div>
<div class="t c" style="left:1037.40px;top:446.38px;width:64.00px;text-align:right;letter-spacing:-0.153px;"><span>0,00</span></div>
<div class="t c" style="left:1105.50px;top:446.38px;width:63.60px;text-align:right;letter-spacing:-0.213px;"><span>208.000,00</span></div>
<div class="t c" style="left:1174.70px;top:446.38px;letter-spacing:-1.211px;"><span>ÜBER</span></div>
<div class="t c u" style="left:11.20px;top:460.20px;letter-spacing:-0.646px;"><span>MW99000</span></div>
<div class="t c" style="left:55.90px;top:460.20px;letter-spacing:-0.539px;"><span>Falbeispiel Privatisierung</span></div>
<div class="t c u" style="left:153.50px;top:460.20px;width:69.70px;text-align:right;letter-spacing:-0.464px;"><span>MW-99000-0020</span></div>
<div class="t c" style="left:228.00px;top:460.20px;letter-spacing:-0.663px;"><span>VE 20</span></div>
<div class="t c" style="left:435.30px;top:460.20px;width:57.90px;text-align:right;letter-spacing:-0.252px;"><span>77,000</span></div>
<div class="t c" style="left:497.30px;top:460.20px;width:56.20px;text-align:right;letter-spacing:-0.214px;"><span>1,000</span></div>
<div class="t c" style="left:557.60px;top:460.20px;width:47.10px;text-align:right;letter-spacing:-0.252px;"><span>77,000</span></div>
<div class="t c" style="left:610.30px;top:460.20px;letter-spacing:-0.315px;"><span>IF</span></div>
<div class="t c" style="left:754.50px;top:460.20px;width:72.70px;text-align:right;letter-spacing:-0.213px;"><span>192.500,00</span></div>
<div class="t c" style="left:831.30px;top:460.20px;width:63.30px;text-align:right;letter-spacing:-0.153px;"><span>0,00</span></div>
<div class="t c" style="left:898.70px;top:460.20px;width:66.90px;text-align:right;letter-spacing:-0.153px;"><span>0,00</span></div>
<div class="t c" style="left:969.70px;top:460.20px;width:63.60px;text-align:right;letter-spacing:-0.153px;"><span>0,00</span></div>
<div class="t c" style="left:1037.40px;top:460.20px;width:64.00px;text-align:right;letter-spacing:-0.153px;"><span>0,00</span></div>
<div class="t c" style="left:1105.50px;top:460.20px;width:63.60px;text-align:right;letter-spacing:-0.153px;"><span>0,00</span></div>
<div class="t c" style="left:1174.70px;top:460.20px;letter-spacing:-1.057px;"><span>OHNE</span></div>
<svg class="abs" style="left:9px;top:185px" width="46" height="14"><path d="M0.5 5 V0.5 H5 M41 0.5 H45.5 V5 M45.5 9 V13.5 H41 M5 13.5 H0.5 V9" stroke="#e03030" fill="none" stroke-width="1.2"/></svg>
<div class="abs" style="left:439px;top:481px;width:3px;height:3px;background:#75701e"></div>
<div class="t s" style="left:435.30px;top:475.10px;width:57.70px;text-align:right;letter-spacing:0.137px;"><span>1.915,000</span></div>
<div class="abs" style="left:501px;top:481px;width:3px;height:3px;background:#75701e"></div>
<div class="t s" style="left:497.30px;top:475.10px;width:56.00px;text-align:right;letter-spacing:0.117px;"><span>20,000</span></div>
<div class="abs" style="left:758px;top:481px;width:3px;height:3px;background:#75701e"></div>
<div class="t s" style="left:754.50px;top:475.10px;width:72.50px;text-align:right;letter-spacing:0.148px;"><span>4.718.000,00</span></div>
<div class="abs" style="left:835px;top:481px;width:3px;height:3px;background:#75701e"></div>
<div class="t s" style="left:831.30px;top:475.10px;width:63.10px;text-align:right;letter-spacing:0.129px;"><span>581.750,00</span></div>
<div class="abs" style="left:902px;top:481px;width:3px;height:3px;background:#75701e"></div>
<div class="t s" style="left:898.70px;top:475.10px;width:69.60px;text-align:right;letter-spacing:0.135px;"><span>368.750,00-</span></div>
<div class="abs" style="left:973px;top:481px;width:3px;height:3px;background:#75701e"></div>
<div class="t s" style="left:969.70px;top:475.10px;width:63.40px;text-align:right;letter-spacing:0.129px;"><span>213.000,00</span></div>
<div class="abs" style="left:1041px;top:481px;width:3px;height:3px;background:#75701e"></div>
<div class="t s" style="left:1037.40px;top:475.10px;width:63.80px;text-align:right;letter-spacing:0.129px;"><span>345.000,00</span></div>
<div class="abs" style="left:1109px;top:481px;width:3px;height:3px;background:#75701e"></div>
<div class="t s" style="left:1105.50px;top:475.10px;width:63.40px;text-align:right;letter-spacing:0.129px;"><span>558.000,00</span></div>
<div class="abs" style="left:1221px;top:481px;width:3px;height:3px;background:#75701e"></div>
<div class="abs" style="left:8px;top:774.3px;width:1224px;height:1.3px;background:#d4d4d4"></div>
<div class="abs" style="left:254.5px;top:780px;width:766px;height:7px;background:#b6c2cc"></div>
<svg class="abs" style="left:230.5px;top:779.5px" width="5" height="7"><path d="M3.5 0.5 L0.8 3 L3.5 5.5" stroke="#444" stroke-width="1.4" fill="none"/></svg>
<svg class="abs" style="left:244.5px;top:779.5px" width="5" height="7"><path d="M0.8 0.5 L3.5 3 L0.8 5.5" stroke="#444" stroke-width="1.4" fill="none"/></svg>
<svg class="abs" style="left:1208.5px;top:779.5px" width="5" height="7"><path d="M3.5 0.5 L0.8 3 L3.5 5.5" stroke="#444" stroke-width="1.4" fill="none"/></svg>
<svg class="abs" style="left:1222.0px;top:779.5px" width="5" height="7"><path d="M0.8 0.5 L3.5 3 L0.8 5.5" stroke="#444" stroke-width="1.4" fill="none"/></svg>
<svg class="abs" style="left:634px;top:781px" width="9" height="5"><path d="M1 0.5 V4.5 M3 0.5 V4.5 M5 0.5 V4.5" stroke="#f0f4f8" stroke-width="1"/></svg>
</body></html>
